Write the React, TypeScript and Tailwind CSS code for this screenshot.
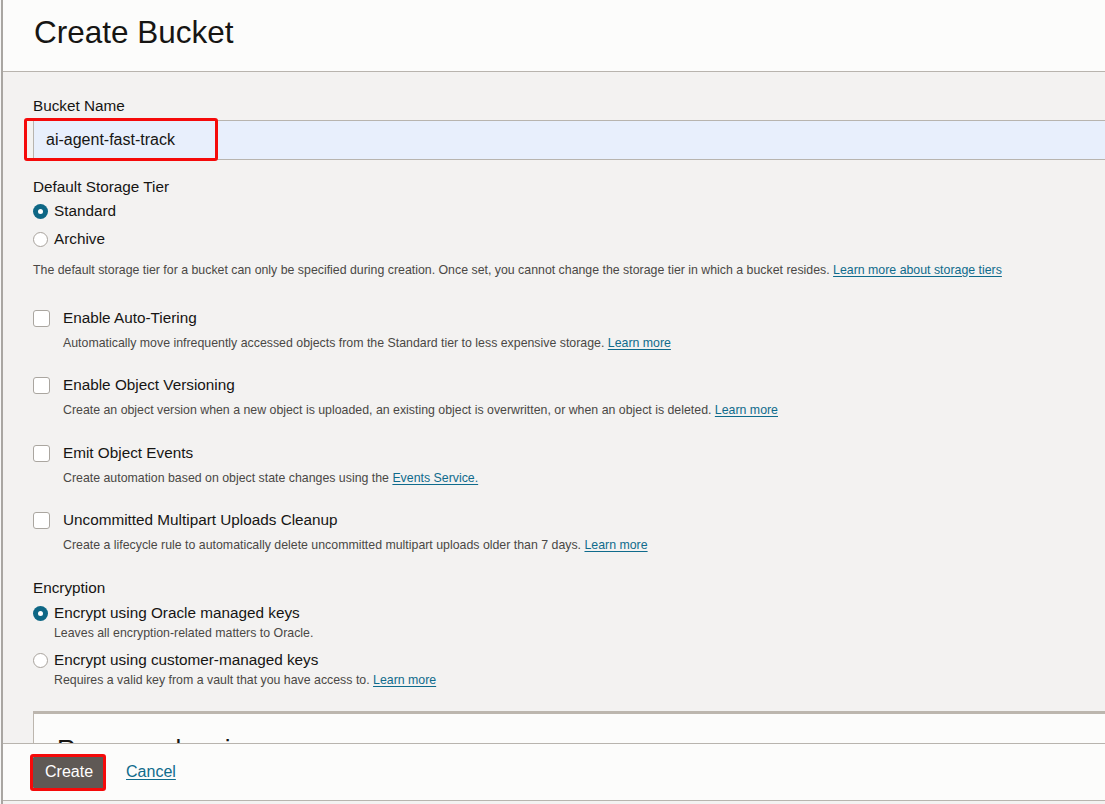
import React from 'react';

function Radio({ checked }: { checked?: boolean }) {
  if (checked) {
    return (
      <span className="flex h-[15px] w-[15px] shrink-0 items-center justify-center rounded-full bg-[#0e6785]">
        <span className="h-[5px] w-[5px] rounded-full bg-white" />
      </span>
    );
  }
  return <span className="h-[15px] w-[15px] shrink-0 rounded-full border border-[#a8a39d] bg-white" />;
}

function Checkbox() {
  return <span className="h-[17px] w-[17px] shrink-0 rounded-[3px] border border-[#aaa6a0] bg-white" />;
}

function Link({ children }: { children: React.ReactNode }) {
  return <a className="text-[#0f6b8c] underline underline-offset-2">{children}</a>;
}

function Option({
  title,
  className,
  children,
}: {
  title: string;
  className: string;
  children: React.ReactNode;
}) {
  return (
    <div className={className}>
      <div className="flex h-[18px] items-center">
        <Checkbox />
        <span className="ml-[13px] text-[15.3px] leading-[18px]">{title}</span>
      </div>
      <p className="mt-[8px] pl-[30px] text-[12.35px] leading-[16px] text-[#4a4845]">{children}</p>
    </div>
  );
}

export default function App() {
  return (
    <div className="flex h-[804px] w-[1105px] overflow-hidden bg-[#f3f2f1] font-['Liberation_Sans',Arial,sans-serif] text-[#161513]">
      <div className="w-[3px] shrink-0 border-r-2 border-[#a9a6a2] bg-[#f7f7f7]" />
      <div className="flex min-w-0 flex-1 flex-col">
        <div className="flex h-[72px] shrink-0 items-center border-b border-[#b8b4ae] bg-[#fcfcfb] pl-[31px]">
          <h1 className="-mt-[8px] text-[31.5px] leading-[36px]">Create Bucket</h1>
        </div>

        <div className="min-h-0 flex-1 overflow-hidden pl-[30px] pt-[25px]">
          <label className="block text-[15.3px] leading-[18px]">Bucket Name</label>
          <div className="relative mt-[5px]">
            <div className="flex h-[40px] items-center border-y border-l border-[#b8b4ae] bg-[#e8effc] pl-[12px] text-[16px]">
              ai-agent-fast-track
            </div>
            <span className="absolute -left-[9px] -top-[2px] h-[43px] w-[194px] rounded-[3px] border-[3px] border-[#f50a0a]" />
          </div>

          <div className="mt-[18px] text-[15.3px] leading-[18px]">Default Storage Tier</div>
          <div className="mt-[1px] flex h-[28px] items-center gap-[6px] text-[15.3px]">
            <Radio checked />
            <span>Standard</span>
          </div>
          <div className="flex h-[28px] items-center gap-[6px] text-[15.3px]">
            <Radio />
            <span>Archive</span>
          </div>
          <p className="mt-[9px] text-[12.35px] leading-[16px] text-[#4a4845]">
            The default storage tier for a bucket can only be specified during creation. Once set, you cannot change
            the storage tier in which a bucket resides. <Link>Learn more about storage tiers</Link>
          </p>

          <Option title="Enable Auto-Tiering" className="mt-[31px]">
            Automatically move infrequently accessed objects from the Standard tier to less expensive storage.{' '}
            <Link>Learn more</Link>
          </Option>
          <Option title="Enable Object Versioning" className="mt-[25px]">
            Create an object version when a new object is uploaded, an existing object is overwritten, or when an
            object is deleted. <Link>Learn more</Link>
          </Option>
          <Option title="Emit Object Events" className="mt-[26px]">
            Create automation based on object state changes using the <Link>Events Service.</Link>
          </Option>
          <Option title="Uncommitted Multipart Uploads Cleanup" className="mt-[25px]">
            Create a lifecycle rule to automatically delete uncommitted multipart uploads older than 7 days.{' '}
            <Link>Learn more</Link>
          </Option>

          <div className="mt-[26px] text-[15.3px] leading-[18px]">Encryption</div>
          <div className="mt-[7px] flex h-[18px] items-center gap-[6px] text-[15.3px]">
            <Radio checked />
            <span>Encrypt using Oracle managed keys</span>
          </div>
          <p className="mt-[3px] pl-[21px] text-[12.35px] leading-[16px] text-[#4a4845]">
            Leaves all encryption-related matters to Oracle.
          </p>
          <div className="mt-[10px] flex h-[18px] items-center gap-[6px] text-[15.3px]">
            <Radio />
            <span>Encrypt using customer-managed keys</span>
          </div>
          <p className="mt-[3px] pl-[21px] text-[12.35px] leading-[16px] text-[#4a4845]">
            Requires a valid key from a vault that you have access to. <Link>Learn more</Link>
          </p>

          <div className="mt-[23px] h-[120px] border-l border-t-[3px] border-[#bcb6ae] bg-[#fcfcfb] pl-[23px] pt-[19px]">
            <h2 className="text-[26px] leading-[32px]">Resource logging</h2>
          </div>
        </div>

        <div className="flex h-[58px] shrink-0 items-center gap-[21px] border-y border-[#b8b4ae] bg-[#fcfcfb] pl-[30px]">
          <div className="relative">
            <button className="h-[33px] rounded-[2px] bg-[#5f5955] px-[12px] text-[16px] text-white">Create</button>
            <span className="absolute -left-[3px] -top-[2px] h-[37px] w-[76px] rounded-[3px] border-[3px] border-[#f50a0a]" />
          </div>
          <a className="text-[16px] text-[#0f6b8c] underline underline-offset-2">Cancel</a>
        </div>
        <div className="h-[3px] shrink-0 bg-[#f3f2f1]" />
      </div>
    </div>
  );
}
